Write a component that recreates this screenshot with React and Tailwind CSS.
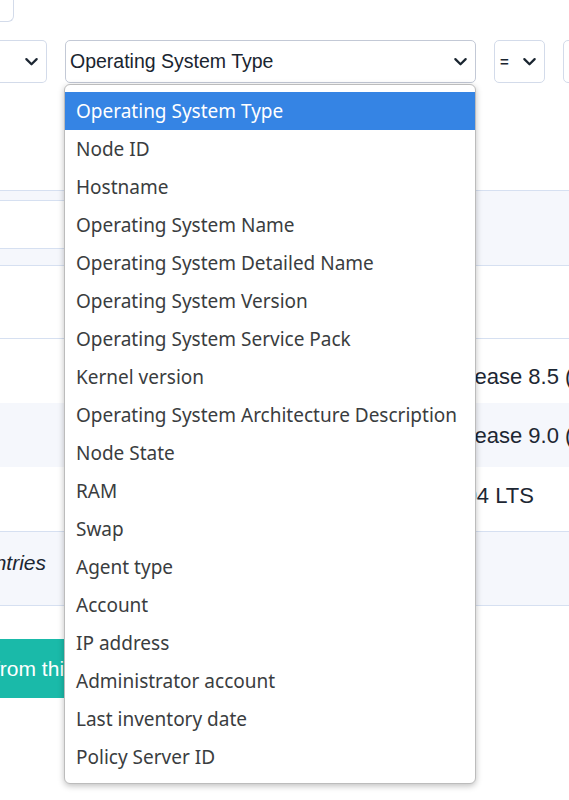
import React from "react";

const items = [
  "Operating System Type",
  "Node ID",
  "Hostname",
  "Operating System Name",
  "Operating System Detailed Name",
  "Operating System Version",
  "Operating System Service Pack",
  "Kernel version",
  "Operating System Architecture Description",
  "Node State",
  "RAM",
  "Swap",
  "Agent type",
  "Account",
  "IP address",
  "Administrator account",
  "Last inventory date",
  "Policy Server ID",
];

function Chevron({ className = "" }) {
  return (
    <svg viewBox="0 0 16 16" className={className} fill="none" stroke="currentColor" strokeWidth="2.4" strokeLinecap="round" strokeLinejoin="round">
      <path d="M2.5 5.5 8 11l5.5-5.5" />
    </svg>
  );
}

const rows = [
  { os: "CentOS Linux release 8.5 (Core)", cls: "bg-white pt-[10px] pl-[307px]" },
  { os: "CentOS Linux release 9.0 (Stream)", cls: "bg-[#f5f7fc] pl-[307px]" },
  { os: "Ubuntu 22.04 LTS", cls: "bg-white pb-[8px] pl-[357px]" },
];

export default function App() {
  return (
    <div className="relative w-[569px] h-[800px] overflow-hidden bg-white text-[#1d2733]" style={{ fontFamily: '"Liberation Sans", Arial, sans-serif' }}>
      {/* top-left clipped box */}
      <div className="h-[22px]">
        <div className="w-[14px] h-[22px] border-r border-b border-[#d3dbea] rounded-br-[6px]" />
      </div>

      {/* filter selects */}
      <div className="mt-[18px] flex items-stretch h-[43px] gap-[18px]">
        <div className="w-[47px] shrink-0 border-y border-r border-[#d3dbea] rounded-r-[5px] flex items-center justify-end pr-[7px] text-[#1d2733]">
          <Chevron className="w-[15px] h-[15px]" />
        </div>
        <div className="w-[411px] shrink-0 border border-[#c3c9d6] rounded-[5px] flex items-center justify-between pl-[4px] pr-[7px] text-[19.5px] text-[#1a2530]">
          <span>Operating System Type</span>
          <Chevron className="w-[15px] h-[15px]" />
        </div>
        <div className="w-[51px] shrink-0 border border-[#d3dbea] rounded-[5px] flex items-center justify-between pl-[5px] pr-[7px] text-[#1a2530]">
          <span className="text-[15px] font-bold leading-none">=</span>
          <Chevron className="w-[15px] h-[15px]" />
        </div>
        <div className="w-[60px] shrink-0 border border-[#d3dbea] rounded-[5px]" />
      </div>

      {/* filter bar */}
      <div className="mt-[107px] border-y border-[#d6e0f1] bg-[#f5f7fc] pt-[9px] pb-[16px]">
        <div className="w-[320px] h-[49px] border-y border-r border-[#d6e0f1] bg-white rounded-r-[4px]" />
      </div>

      {/* header row */}
      <div className="h-[73px] border-b border-[#d6e0f1] bg-white" />

      {rows.map((r, i) => (
        <div key={i} className={`h-[64px] flex items-center ${r.cls}`}>
          <div className="text-[22px] whitespace-nowrap">{r.os}</div>
        </div>
      ))}

      {/* footer */}
      <div className="h-[75px] border-y border-[#d6e0f1] bg-[#f5f7fc] flex items-center pb-[12px]">
        <div className="w-[46px] overflow-hidden flex justify-end">
          <span className="italic text-[21px] whitespace-nowrap">Showing 1 to 3 of 3 entries</span>
        </div>
      </div>

      {/* button */}
      <div className="mt-[33px] flex">
        <div className="w-[300px] h-[59px] overflow-hidden flex items-center bg-[#1abaa9] text-white text-[21px] rounded-r-[4px]">
          <span className="whitespace-nowrap -ml-[90px]">Remove from this group</span>
        </div>
      </div>

      {/* dropdown overlay */}
      <div
        className="absolute left-[64px] top-[84px] w-[412px] h-[700px] bg-white border border-[#bcbcbc] rounded-[6px] shadow-[0_2px_6px_rgba(0,0,0,0.25)] pt-[7px] pb-[5px]"
        style={{ fontFamily: '"Noto Sans", sans-serif' }}
      >
        {items.map((it, i) => (
          <div
            key={it}
            className={`h-[38px] flex items-center pl-[11px] text-[19px] whitespace-nowrap ${i === 0 ? "bg-[#3584e4] text-white" : "text-[#3a3d40]"}`}
          >
            {it}
          </div>
        ))}
      </div>
    </div>
  );
}
